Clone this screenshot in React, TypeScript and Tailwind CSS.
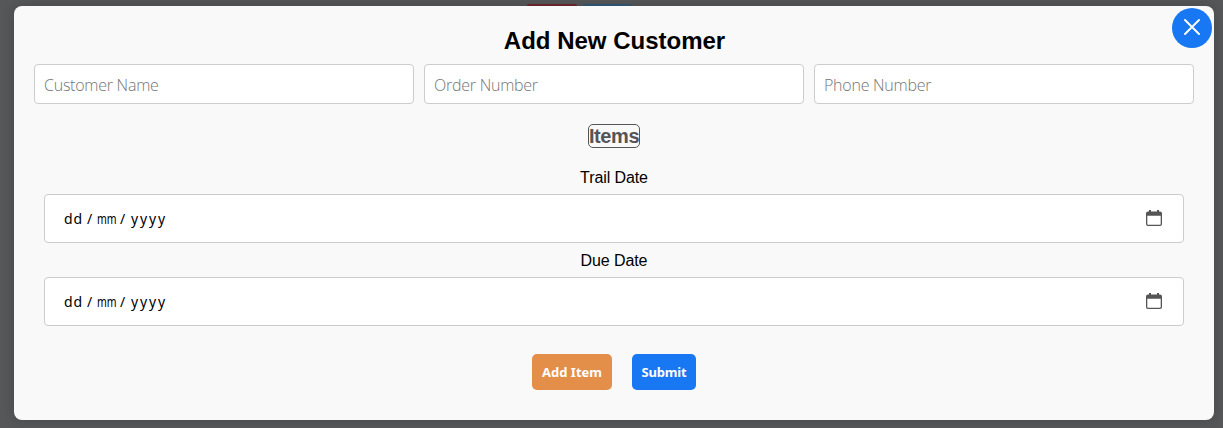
import React from "react";

const fields = ["Customer Name", "Order Number", "Phone Number"];

function CalendarIcon() {
  return (
    <svg className="mb-px" width="16" height="16" viewBox="0 0 16 16" fill="none" aria-hidden="true">
      <path d="M3 0h2v1.5h6V0h2v1.5h1a2 2 0 0 1 2 2V14a2 2 0 0 1-2 2H2a2 2 0 0 1-2-2V3.5a2 2 0 0 1 2-2h1V0ZM1.3 5.8V13.7c0 .6.4 1 1 1h11.4c.6 0 1-.4 1-1V5.8H1.3Z" fill="#555" fillRule="evenodd" />
    </svg>
  );
}

function DateField({ label }: { label: string }) {
  return (
    <div className="h-[83px] px-2.5">
      <div className="flex h-[27px] items-start justify-center pt-px text-base leading-5 tracking-[-0.1px]">{label}</div>
      <div className="flex h-[49px] items-center justify-between rounded border border-[#ccc] bg-white pl-[19px] pr-[21px]">
        <span className="flex font-['Noto_Sans'] text-[14px] leading-5">
          <span className="w-[23px] tracking-[0.8px]">dd</span>
          <span className="w-[10px]">/</span>
          <span className="w-[23px]"><span className="inline-block origin-left scale-x-75">mm</span></span>
          <span className="w-[11px]">/</span>
          <span className="tracking-[1.9px]">yyyy</span>
        </span>
        <CalendarIcon />
      </div>
    </div>
  );
}

export default function App() {
  return (
    <div className="h-[428px] overflow-hidden bg-[#565758] pl-[14px] pr-[9px] font-['Liberation_Sans',sans-serif] text-black">
      <div className="flex h-1.5 items-end gap-1.5 pl-[513px]">
        <div className="h-0.5 w-[50px] rounded-t bg-[#702630]" />
        <div className="h-0.5 w-[49px] rounded-t bg-[#315a7a]" />
      </div>
      <main className="relative flex h-[414px] flex-col rounded-lg bg-[#f9f9f9] px-5 shadow-[0_0_12px_rgba(0,0,0,0.18)]">
        <h1 className="flex h-[58px] items-center justify-center pl-px pt-[11px] text-2xl font-bold">Add New Customer</h1>
        <div className="grid grid-cols-3 gap-2.5">
          {fields.map((field) => (
            <input key={field} aria-label={field} placeholder={field} className="h-10 min-w-0 rounded border border-[#ccc] bg-white px-[9px] pt-px font-['Open_Sans'] text-base font-light tracking-[-0.25px] placeholder:text-[#757575] placeholder:opacity-100" />
          ))}
        </div>
        <div className="flex h-[63px] justify-center pt-5">
          <h2 className="flex h-6 w-[52px] items-center justify-center rounded-[5px] border border-[#555] text-xl font-bold leading-none tracking-[-0.4px] text-[#555]">Items</h2>
        </div>
        <DateField label="Trail Date" />
        <DateField label="Due Date" />
        <div className="flex justify-center gap-5 pt-[21px] font-['Noto_Sans'] text-[13px] font-bold text-white">
          <button className="h-9 w-20 rounded-[5px] bg-[#e38f49] pt-0.5">Add Item</button>
          <button className="h-9 w-16 rounded-[5px] bg-[#1877f2] pt-0.5 tracking-[-0.2px]">Submit</button>
        </div>
        <button aria-label="Close" className="absolute right-0.5 top-0.5 flex size-10 items-center justify-center rounded-full bg-[#1877f2] pb-0.5">
          <svg width="16" height="16" viewBox="0 0 16 16" fill="none" stroke="white" strokeWidth="1.9" strokeLinecap="round">
            <path d="m1 1 14 14M15 1 1 15" />
          </svg>
        </button>
      </main>
    </div>
  );
}
